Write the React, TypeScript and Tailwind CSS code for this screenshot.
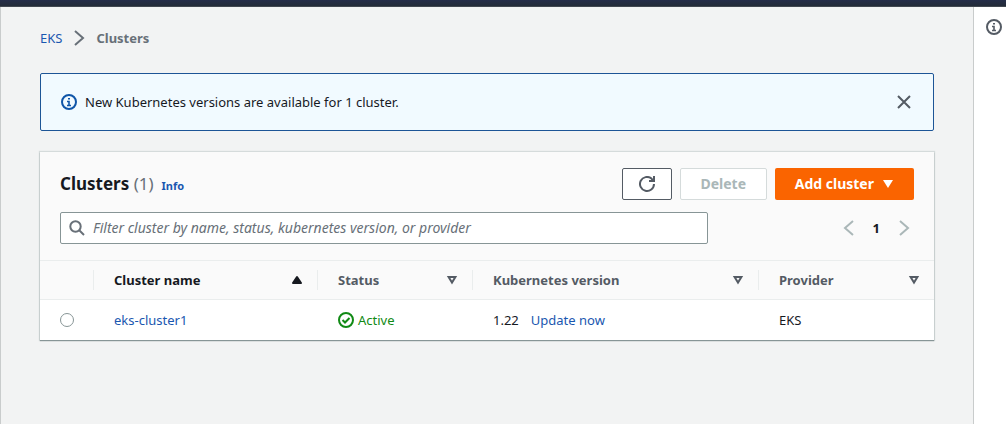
import type { ReactNode } from "react";

function InfoIcon() {
  return (
    <svg viewBox="0 0 16 16" className="block size-4" fill="none" stroke="currentColor" strokeWidth="2" aria-hidden="true">
      <circle cx="8" cy="8" r="7" />
      <path d="M6 7.5h2V11M6 11.5h4M7 4.8h2" strokeWidth="1.6" />
    </svg>
  );
}

function Chevron({ left = false, className = "" }: { left?: boolean; className?: string }) {
  return (
    <svg viewBox="0 0 16 16" className={`block size-4 ${className}`} fill="none" stroke="currentColor" strokeWidth="2" aria-hidden="true">
      <path d={left ? "M12 1 4 8l8 7" : "M4 1l8 7-8 7"} />
    </svg>
  );
}

function SortIcon({ active }: { active: boolean }) {
  return (
    <svg viewBox="0 0 12 12" className="block size-3 shrink-0" fill={active ? "currentColor" : "none"} stroke="currentColor" strokeWidth="2" strokeLinejoin={active ? "round" : "miter"} aria-hidden="true">
      <path d={active ? "M6 3l4 6H2z" : "M2.6 3h6.8L6 8.6z"} />
    </svg>
  );
}

function HeaderCell({ children, active = false }: { children: ReactNode; active?: boolean }) {
  return (
    <th scope="col" className="p-0 font-bold">
      <div className={`flex h-5 items-center border-l border-[#eaeded] pl-5 ${active ? "text-[#16191f]" : "text-[#545b64]"}`}>
        <button type="button" className="flex flex-1 items-center justify-between pr-3.5 text-left">
          {children}
          <SortIcon active={active} />
        </button>
      </div>
    </th>
  );
}

export default function App() {
  return (
    <div className="flex min-h-screen flex-col bg-[#f2f3f3] font-['Noto_Sans',sans-serif] text-[13px] leading-5 text-[#16191f]">
      <header className="h-[7px] border-b border-[#414750] bg-linear-to-b from-[#252d49] to-[#232b38]" />
      <div className="flex flex-1">
        <main className="min-w-0 flex-1 border-l border-[#c9cccc] px-[39px] pt-[21px]">
          <nav aria-label="Breadcrumb" className="flex items-center gap-[9px]">
            <a href="#eks" className="text-[#1a57b0]">EKS</a>
            <Chevron className="text-[#687078]" />
            <span aria-current="page" className="font-bold text-[#687078]">Clusters</span>
          </nav>

          <div role="status" className="mt-[25px] flex h-[58px] items-center rounded-xs border border-[#1d5596] bg-[#f1faff] px-5">
            <span className="text-[#0f55a8]"><InfoIcon /></span>
            <p className="ml-2 flex-1">New Kubernetes versions are available for 1 cluster.</p>
            <button type="button" aria-label="Dismiss" className="mr-px text-[#545b64]">
              <svg viewBox="0 0 16 16" className="block size-4" fill="none" stroke="currentColor" strokeWidth="2" aria-hidden="true">
                <path d="M2 2l12 12M14 2 2 14" />
              </svg>
            </button>
          </div>

          <section className="mt-[21px] bg-[#fafafa] shadow-[0_1px_1px_#879596,0_0_1px_1px_#d5dbdb]">
            <div className="px-5 py-4">
              <div className="flex items-center gap-2">
                <h2 className="text-[17px] leading-5 font-bold">
                  Clusters <span className="font-normal text-[#687078]">(1)</span>
                </h2>
                <a href="#info" className="pt-1 text-[11px] font-bold text-[#1a57b0]">Info</a>
                <div className="ml-auto flex gap-2">
                  <button type="button" aria-label="Refresh" className="flex h-8 w-[50px] items-center justify-center rounded-xs border border-[#545b64] bg-white text-[#545b64]">
                    <svg viewBox="0 0 16 16" className="block size-4" fill="none" stroke="currentColor" strokeWidth="2" aria-hidden="true">
                      <path d="M15 8a7 7 0 1 1-2.5-5.4L14.5 5" />
                      <path d="M15 0v5h-5" />
                    </svg>
                  </button>
                  <button type="button" disabled className="h-8 w-[87px] rounded-xs border border-[#d5dbdb] bg-white text-sm font-bold text-[#aab7b8]">Delete</button>
                  <button type="button" className="flex h-8 items-center gap-2 rounded-xs bg-[#fa6400] px-5 text-sm font-bold text-white">
                    Add cluster
                    <svg viewBox="0 0 12 12" className="block size-3" fill="currentColor" aria-hidden="true">
                      <path d="M1 2h10L6 10z" />
                    </svg>
                  </button>
                </div>
              </div>

              <div className="mt-3 flex items-center justify-between gap-8">
                <label className="flex h-8 max-w-[648px] flex-1 items-center gap-2 rounded-xs border border-[#879596] bg-white px-2">
                  <svg viewBox="0 0 16 16" className="block size-4 shrink-0 text-[#687078]" fill="none" stroke="currentColor" strokeWidth="2" aria-hidden="true">
                    <circle cx="6.5" cy="6.5" r="5.2" />
                    <path d="M10.5 10.5 15 15" />
                  </svg>
                  <input
                    type="text"
                    aria-label="Filter clusters"
                    placeholder="Filter cluster by name, status, kubernetes version, or provider"
                    className="min-w-0 flex-1 bg-transparent text-sm outline-none placeholder:text-[#687078] placeholder:italic"
                  />
                </label>
                <div className="flex items-center gap-4">
                  <button type="button" aria-label="Previous page" disabled className="text-[#aab7b8]"><Chevron left /></button>
                  <span className="font-bold">1</span>
                  <button type="button" aria-label="Next page" disabled className="text-[#aab7b8]"><Chevron className="mr-0.5" /></button>
                </div>
              </div>
            </div>

            <table className="w-full table-fixed border-t border-[#eaeded] text-left">
              <colgroup>
                <col className="w-[53px]" />
                <col className="w-[224px]" />
                <col className="w-[155px]" />
                <col className="w-[286px]" />
                <col className="w-[176px]" />
              </colgroup>
              <thead>
                <tr className="h-[39px] border-b border-[#eaeded]">
                  <td />
                  <HeaderCell active>Cluster name</HeaderCell>
                  <HeaderCell>Status</HeaderCell>
                  <HeaderCell>Kubernetes version</HeaderCell>
                  <HeaderCell>Provider</HeaderCell>
                </tr>
              </thead>
              <tbody className="bg-white">
                <tr className="h-10">
                  <td className="pl-5">
                    <input type="radio" name="cluster" aria-label="Select eks-cluster1" className="block size-3.5 appearance-none rounded-full border border-[#879596] bg-white checked:border-4 checked:border-[#0073bb]" />
                  </td>
                  <td className="pl-[21px]"><a href="#eks-cluster1" className="text-[#1a57b0]">eks-cluster1</a></td>
                  <td className="pl-[21px]">
                    <span className="flex items-center gap-1 text-[#118a15]">
                      <svg viewBox="0 0 16 16" className="block size-4" fill="none" stroke="currentColor" strokeWidth="2" aria-hidden="true">
                        <circle cx="8" cy="8" r="7" />
                        <path d="M4.5 8l2.5 2.5L11.5 6" />
                      </svg>
                      Active
                    </span>
                  </td>
                  <td className="pl-[21px]">
                    1.22
                    <a href="#update" className="ml-3 text-[#1a57b0]">Update now</a>
                  </td>
                  <td className="pl-[21px]">EKS</td>
                </tr>
              </tbody>
            </table>
          </section>
        </main>
        <aside className="flex w-[33px] flex-col items-end border-l border-[#c9cccc] bg-white pr-1 pt-3">
          <button type="button" aria-label="Open help panel" className="text-[#545b64]"><InfoIcon /></button>
        </aside>
      </div>
    </div>
  );
}
